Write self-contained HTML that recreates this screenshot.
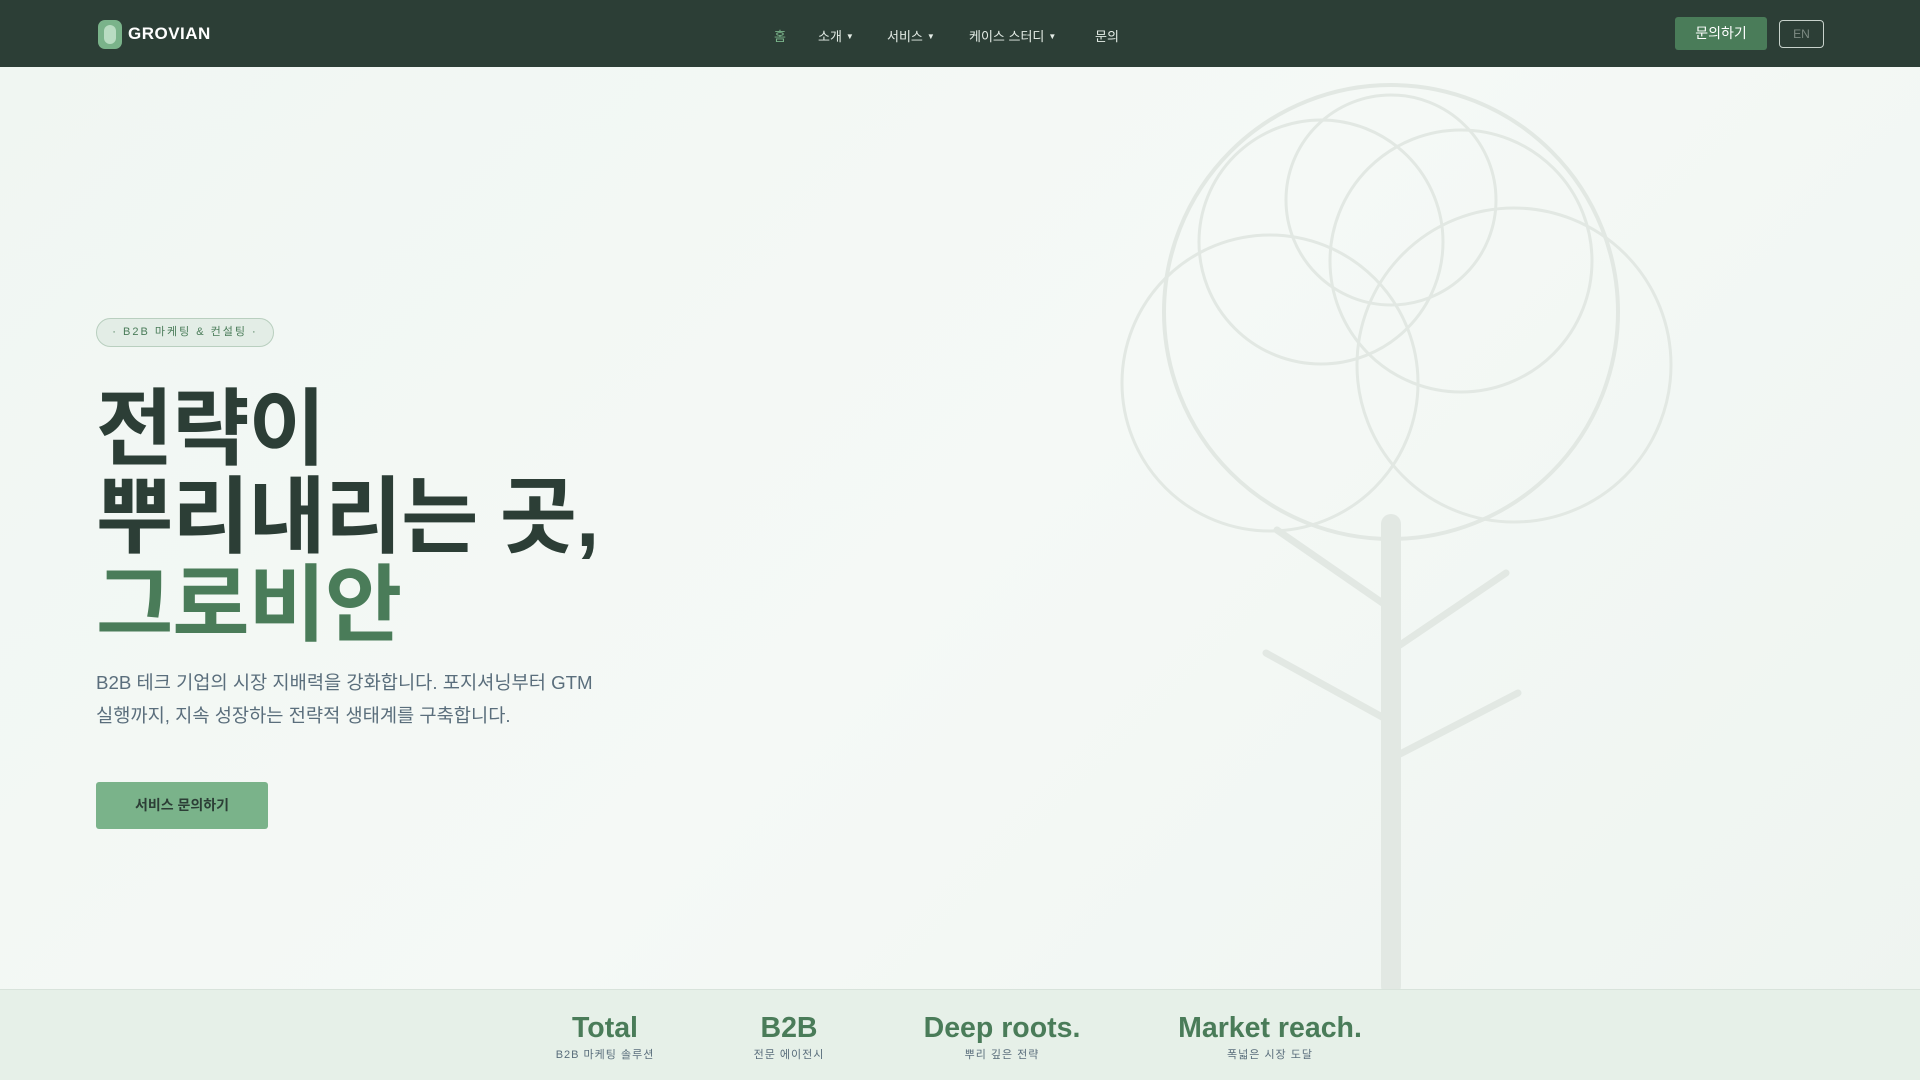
<!DOCTYPE html>
<html><head><meta charset="utf-8"><style>
*{margin:0;padding:0;box-sizing:border-box}
body{width:1920px;height:1080px;overflow:hidden;font-family:"Liberation Sans","Noto Sans CJK KR",sans-serif;background:linear-gradient(135deg,#f0f6f2,#f5f9f6 50%,#eef4f0);position:relative}
.nav{position:absolute;top:0;left:0;width:1920px;height:67px;background:#2c3e36}
.logo{position:absolute;left:98px;top:20px;width:24px;height:29px;border-radius:7px;background:#7ab38a}
.logo::after{content:"";position:absolute;left:6px;top:5px;width:12px;height:19px;border-radius:6px;background:#b9dcc2}
.brand{position:absolute;left:128px;top:24px;color:#fff;font-weight:bold;font-size:17px;letter-spacing:.5px}
.menu{position:absolute;top:26px;font-size:13px;color:#e4ece6}
.menu small{font-size:8px;margin-left:4px;vertical-align:2px}
.cta{position:absolute;left:1675px;top:17px;width:92px;height:33px;background:#4a7c59;border-radius:3px;color:#fff;font-size:14px;text-align:center;line-height:33px}
.en{position:absolute;left:1779px;top:20px;width:45px;height:28px;border:1px solid #c8d2cc;border-radius:4px;color:#7d8a83;font-size:12px;text-align:center;line-height:26px}
.badge{position:absolute;left:96px;top:318px;width:178px;height:29px;border:1px solid #b9cfbf;border-radius:15px;background:#e3ede6;color:#4a7c59;font-size:11px;letter-spacing:2px;text-align:center;line-height:27px}
h1{position:absolute;left:96px;top:385px;font-size:84px;line-height:88px;font-weight:bold;color:#2c3e36;letter-spacing:-1px}
h1 span{color:#4a7c59}
p{position:absolute;left:96px;top:666px;font-size:18.7px;line-height:33px;color:#5a6e7c}
.btn{position:absolute;left:96px;top:782px;width:172px;height:47px;background:#7ab38a;border-radius:3px;color:#2c3e36;font-weight:bold;font-size:14px;text-align:center;line-height:47px}
.stats{position:absolute;left:0;top:989px;width:1920px;height:91px;background:#e6f0e8;border-top:1px solid #d8e3db}
.st{position:absolute;top:22px;transform:translateX(-50%);text-align:center;white-space:nowrap}
.st b{display:block;font-size:28.5px;color:#4a7c59}
.st i{display:block;font-style:normal;font-size:11px;color:#5a6e7c;letter-spacing:1px;margin-top:1px}
svg{position:absolute;left:0;top:0}
</style></head><body>
<svg width="1920" height="1080"><g fill="none" stroke="#e2e8e3" stroke-width="3">
<circle cx="1391" cy="312" r="227" stroke-width="4"/>
<circle cx="1391" cy="200" r="105"/>
<circle cx="1321" cy="242" r="122"/>
<circle cx="1461" cy="261" r="131"/>
<circle cx="1270" cy="383" r="148"/>
<circle cx="1514" cy="365" r="157"/>
<g stroke-linecap="round" stroke-width="7"><line x1="1277" y1="530" x2="1384" y2="604"/><line x1="1506" y1="573" x2="1400" y2="645"/><line x1="1266" y1="653" x2="1384" y2="718"/><line x1="1518" y1="693" x2="1400" y2="754"/></g>
<line x1="1391" y1="524" x2="1391" y2="986" stroke-width="20" stroke-linecap="round"/>
</g></svg>
<div class="nav">
<div class="logo"></div><div class="brand">GROVIAN</div>
<div class="menu" style="left:774px;color:#7ab38a">홈</div>
<div class="menu" style="left:818px">소개<small>▼</small></div>
<div class="menu" style="left:887px">서비스<small>▼</small></div>
<div class="menu" style="left:969px">케이스 스터디<small>▼</small></div>
<div class="menu" style="left:1095px">문의</div>
<div class="cta">문의하기</div><div class="en">EN</div>
</div>
<div class="badge">· B2B 마케팅 &amp; 컨설팅 ·</div>
<h1>전략이<br>뿌리내리는 곳,<br><span>그로비안</span></h1>
<p>B2B 테크 기업의 시장 지배력을 강화합니다. 포지셔닝부터 GTM<br>실행까지, 지속 성장하는 전략적 생태계를 구축합니다.</p>
<div class="btn">서비스 문의하기</div>
<div class="stats">
<div class="st" style="left:605px"><b>Total</b><i>B2B 마케팅 솔루션</i></div>
<div class="st" style="left:789px"><b>B2B</b><i>전문 에이전시</i></div>
<div class="st" style="left:1002px"><b>Deep roots.</b><i>뿌리 깊은 전략</i></div>
<div class="st" style="left:1270px"><b>Market reach.</b><i>폭넓은 시장 도달</i></div>
</div>
</body></html>
